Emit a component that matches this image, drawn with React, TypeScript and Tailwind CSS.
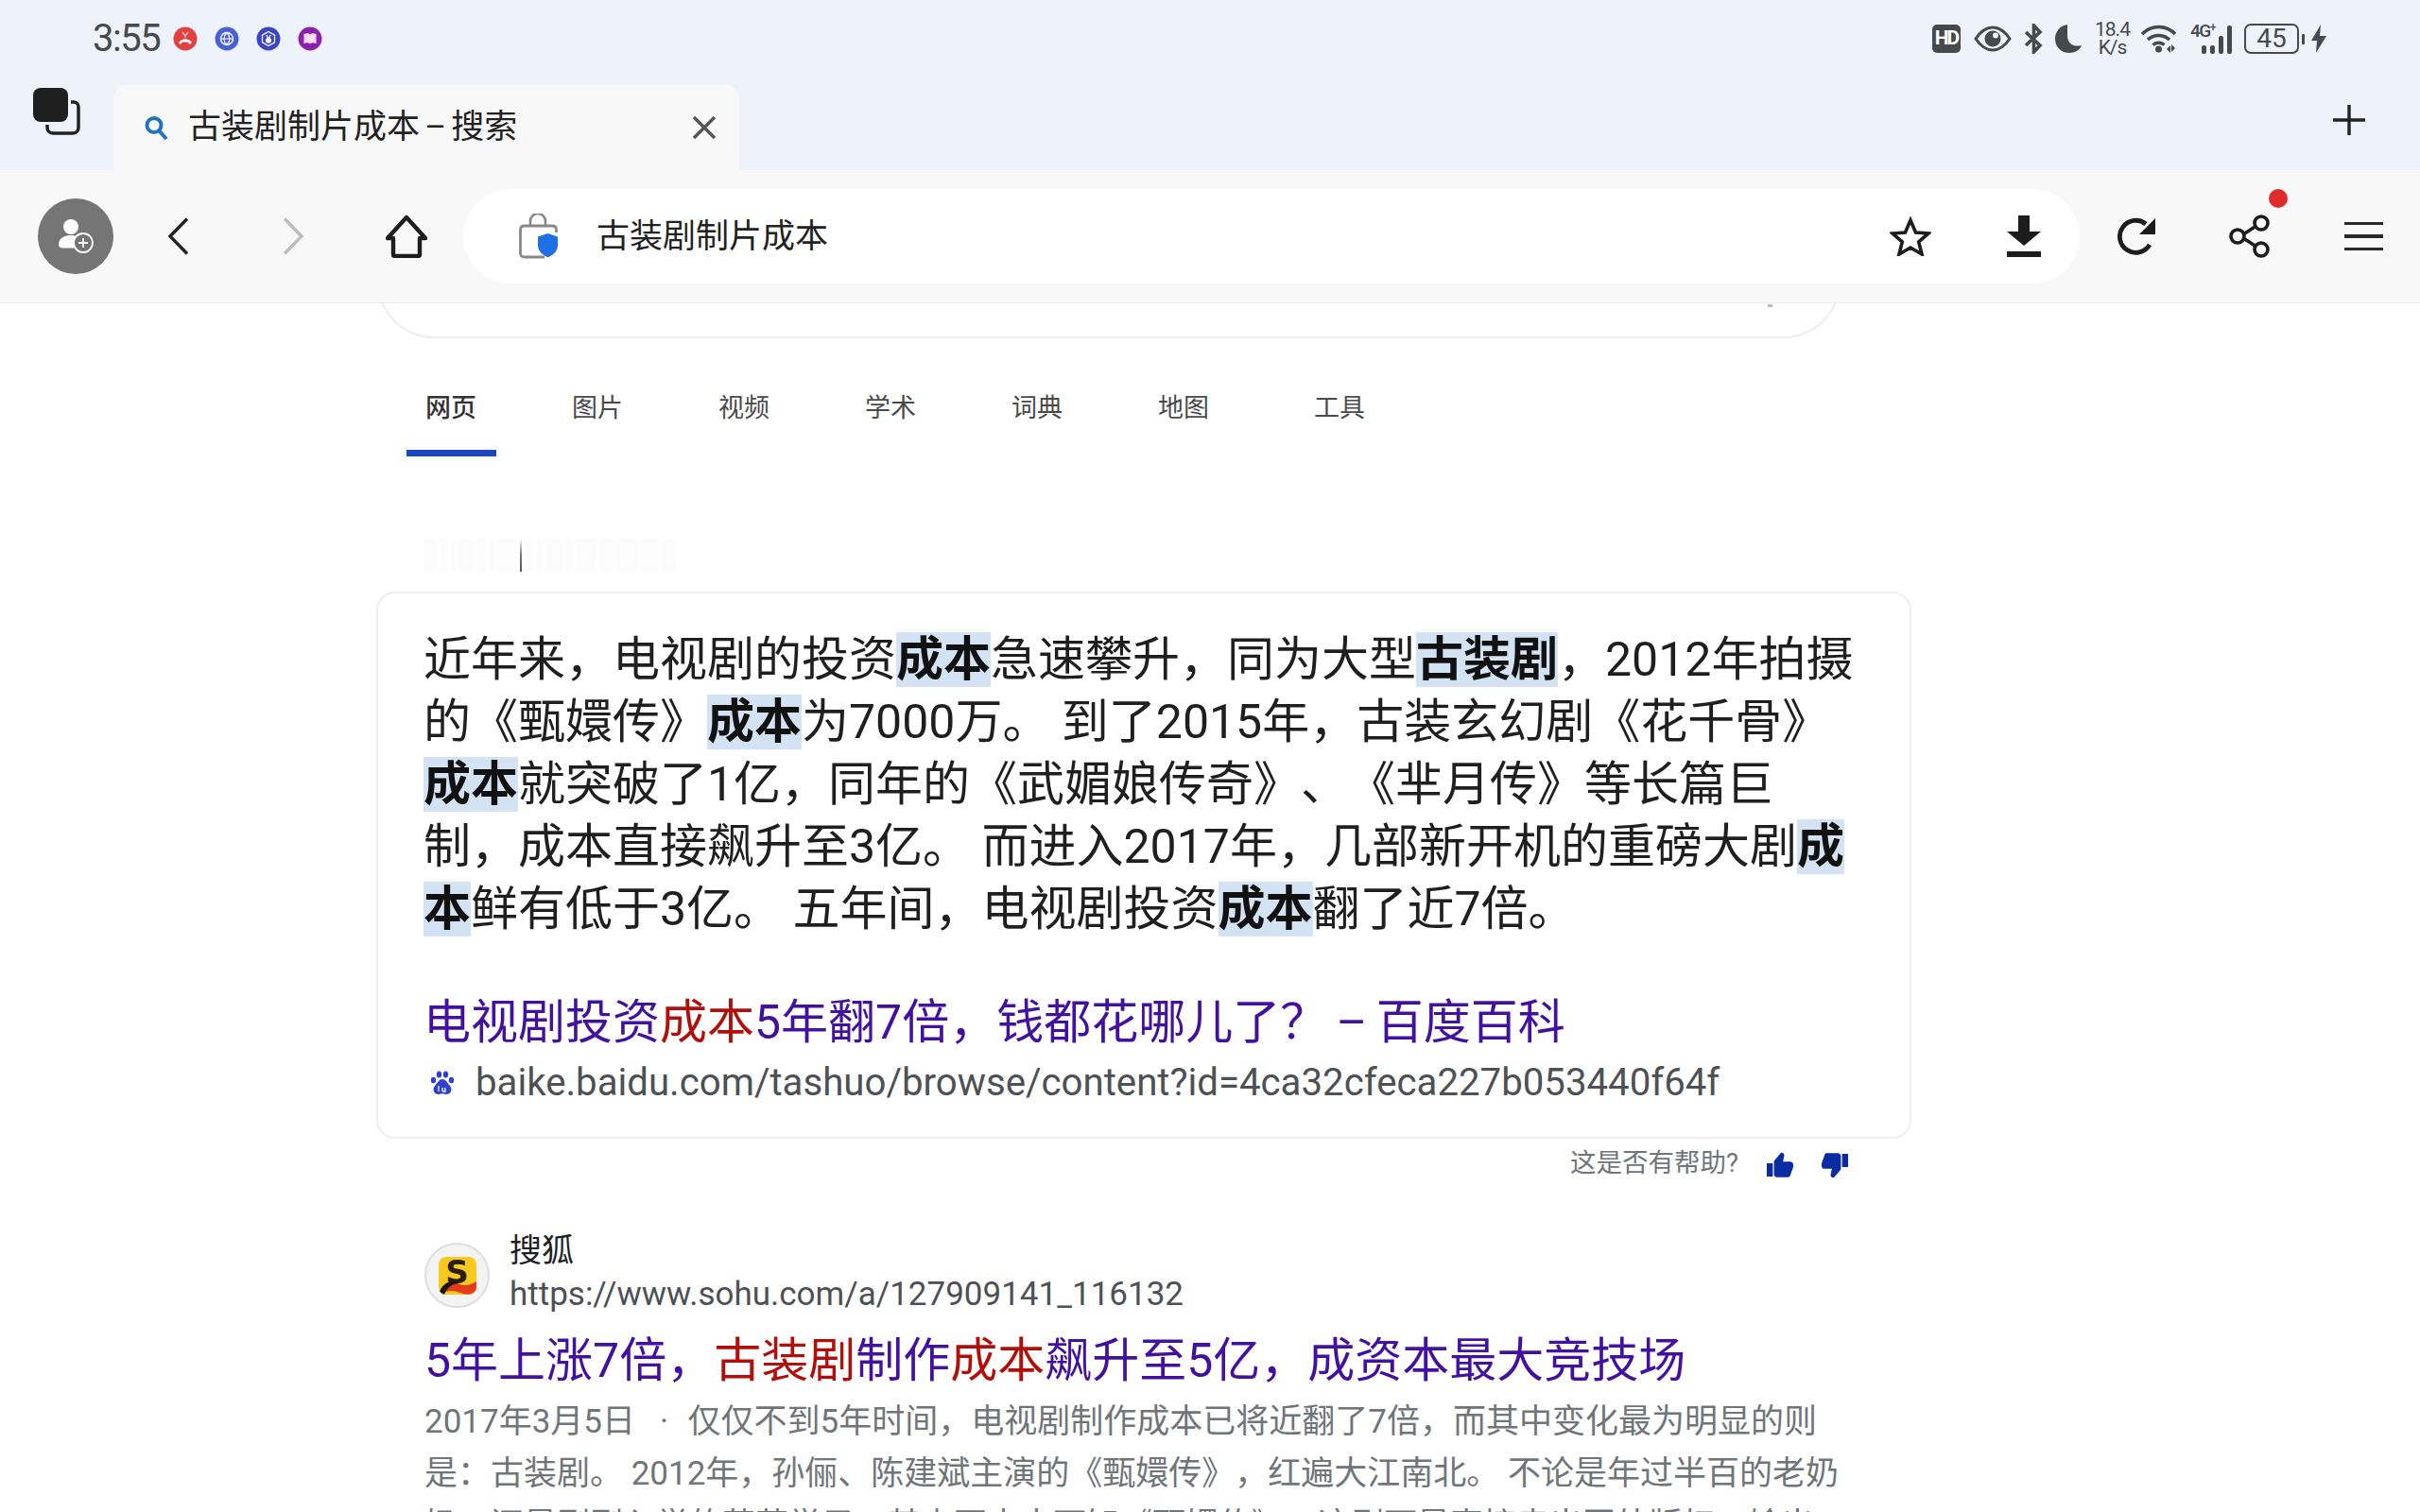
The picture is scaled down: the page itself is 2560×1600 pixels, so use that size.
import React from "react";

const Hl = ({ children }: { children: React.ReactNode }) => (
  <span className="bg-[#d3e3f3] font-bold text-[#111]">{children}</span>
);
const R = ({ children }: { children: React.ReactNode }) => <span className="text-[#b30f0a]">{children}</span>;

function StatusDots() {
  return (
    <div className="flex items-center gap-[18px] ml-[14px]">
      <svg width="26" height="26" viewBox="0 0 26 26"><circle cx="13" cy="13" r="12.5" fill="#df4140" /><path d="M6 17c4-5 10-5 14 0l-2.500 2-2-2.500h-5.500l-2 2.500z" fill="#fff" /><path d="M10 6l3 4 3-4M13 10v2" stroke="#f7c9c0" strokeWidth="1.300" fill="none" /></svg>
      <svg width="26" height="26" viewBox="0 0 26 26"><circle cx="13" cy="13" r="12.500" fill="#4b5fd6" /><circle cx="13" cy="13" r="6.500" fill="none" stroke="#fff" strokeWidth="1.400" /><path d="M6.500 13h13M13 6.500c-4 4-4 9 0 13M13 6.500c4 4 4 9 0 13" stroke="#fff" strokeWidth="1.200" fill="none" /></svg>
      <svg width="26" height="26" viewBox="0 0 26 26"><circle cx="13" cy="13" r="12.500" fill="#3c46c2" /><path d="M13 5.500l6.500 3.700v7.600L13 20.500l-6.500-3.700V9.200z" fill="none" stroke="#fff" strokeWidth="1.200" /><path d="M11 9l1.500 4M15 9l-1.500 4M10.500 14c1-1.500 4-1.500 5 0 0 2-1 3-2.500 3s-2.500-1-2.500-3z" stroke="#fff" strokeWidth="1.300" fill="#fff" /></svg>
      <svg width="26" height="26" viewBox="0 0 26 26"><circle cx="13" cy="13" r="12.500" fill="#8a22ad" /><path d="M6.500 8c3-1 5-1 6.500 .5 1.500-1.500 3.500-1.500 6.500-.5v10c-3-1-5-1-6.500 .5-1.500-1.500-3.500-1.500-6.500-.5z" fill="#fbdcee" /></svg>
    </div>
  );
}

function StatusRight() {
  const c = "#46494d";
  return (
    <div className="ml-auto flex items-center text-[#46494d] mr-[99px]">
      <div className="w-[30px] h-[30px] rounded-[5px] bg-[#46494d] text-white text-[21px] font-bold flex items-center justify-center tracking-[-2px]">HD</div>
      <svg className="ml-[14px]" width="40" height="28" viewBox="0 0 40 28"><path d="M2 14C8 5 14 2 20 2s12 3 18 12c-6 9-12 12-18 12S8 23 2 14z" fill="none" stroke={c} strokeWidth="3" /><circle cx="20" cy="14" r="8.500" fill={c} /><circle cx="23" cy="10.500" r="3" fill="#eef2fa" /></svg>
      <svg className="ml-[13px]" width="21" height="32" viewBox="0 0 21 32"><path d="M2 9l15 14-6.500 7V2L17 9 2 23" fill="none" stroke={c} strokeWidth="3.600" /></svg>
      <svg className="ml-[12px]" width="28" height="30" viewBox="0 0 28 30"><path d="M13 0C5 1 0 8 0 15c0 9 7 15 15 15 6 0 11-3 13-8-7 2-15-1-15-10C13 7 13 3 13 0z" fill={c} /></svg>
      <div className="ml-[14px] w-[37px] flex flex-col items-center text-[21px] leading-[19px] tracking-[-1px]"><span>18.4</span><span>K/s</span></div>
      <svg className="ml-[11px]" width="39" height="30" viewBox="0 0 39 30"><path d="M2 10c10-10 25-10 35 0M8 16c7-6 16-6 23 0M13.500 21.500c3.500-3 8.500-3 12 0" fill="none" stroke={c} strokeWidth="3.600" /><circle cx="19.500" cy="26" r="3.500" fill={c} /><path d="M28 27l4-4v8zM33 22l4 4-4 4z" fill={c} transform="translate(0 -1)" /></svg>
      <div className="ml-[14px] relative w-[44px] h-[31px] flex items-end justify-end gap-[4px]">
        <span className="absolute left-0 top-[-3px] text-[19px] font-medium leading-[20px] tracking-[-1.500px]">4G<sup className="text-[12px]">+</sup></span>
        <i className="w-[5px] h-[9px] bg-[#46494d] rounded-[2px]" />
        <i className="w-[5px] h-[9px] bg-[#46494d] rounded-[2px]" />
        <i className="w-[5px] h-[19px] bg-[#46494d] rounded-[2px]" />
        <i className="w-[5px] h-[30px] bg-[#46494d] rounded-[2px]" />
      </div>
      <div className="ml-[13px] w-[58px] h-[32px] rounded-[7px] border-2 border-[#46494d] flex items-center justify-center text-[28px] leading-none">45</div>
      <i className="ml-[3px] w-[3px] h-[11px] bg-[#46494d] rounded-[1px]" />
      <svg className="ml-[7px]" width="16" height="30" viewBox="0 0 16 30"><path d="M10 0L0 17h6l-1 13 11-18H9z" fill={c} /></svg>
    </div>
  );
}

function Toolbar() {
  return (
    <div className="h-[141px] bg-[#f8f8f8] border-b border-[#ececec] flex items-center relative z-10">
      <div className="ml-[40px] w-[80px] h-[80px] rounded-full bg-[#757575] flex items-center justify-center">
        <svg width="42" height="42" viewBox="0 0 42 42">
          <circle cx="16" cy="11" r="8" fill="#fff" />
          <path d="M3 30c0-7 6-10 13-10 3 0 5 .5 7 1.500-3 2.500-4 6-3 12H8c-3 0-5-1-5-3.500z" fill="#fff" />
          <circle cx="29" cy="28" r="10" fill="#757575" stroke="#fff" strokeWidth="1.800" />
          <path d="M29 23v10M24 28h10" stroke="#fff" strokeWidth="1.800" />
        </svg>
      </div>
      <svg className="ml-[58px]" width="21" height="40" viewBox="0 0 21 40"><path d="M20 1.500L2 20l18 18.500" fill="none" stroke="#222" strokeWidth="3.400" /></svg>
      <svg className="ml-[101px]" width="21" height="40" viewBox="0 0 21 40"><path d="M1 1.500L19 20 1 38.500" fill="none" stroke="#bdbdbd" strokeWidth="3.400" /></svg>
      <svg className="ml-[87px]" width="44" height="46" viewBox="0 0 44 46"><path d="M22 3L2 25h6v17c0 1.500 1 2 2 2h24c1 0 2-.5 2-2V25h6z" fill="none" stroke="#1d1d1d" strokeWidth="4.400" strokeLinejoin="round" /></svg>
      <div className="ml-[38px] w-[1710px] h-[100px] rounded-[50px] bg-white flex items-center">
        <svg className="ml-[59px]" width="42" height="48" viewBox="0 0 42 48">
          <path d="M12 13V8a8 8 0 0 1 16 0v5" fill="none" stroke="#888" strokeWidth="2.600" />
          <path d="M27 46H6c-3 0-4.500-1.500-4.500-4V17c0-2.500 1.500-4 4.500-4h29c3 0 4.500 1.500 4.500 4v3" fill="none" stroke="#888" strokeWidth="2.800" />
          <path d="M30.500 21l10.500 3.500v9c0 6-4.500 10-10.500 13-6-3-10.500-7-10.500-13v-9z" fill="#1f6fe5" />
        </svg>
        <span className="ml-[40px] text-[35px] text-[#222] leading-none whitespace-nowrap">古装剧制片成本</span>
        <svg className="ml-auto" width="44" height="42" viewBox="0 0 44 42"><path d="M22 4l5.500 13 13.500 1-10.300 9 3.300 13L22 33 10 40l3.300-13L3 18l13.500-1z" fill="none" stroke="#1d1d1d" strokeWidth="3.600" strokeLinejoin="miter" /></svg>
        <svg className="ml-[80px] mr-[41px]" width="36" height="44" viewBox="0 0 36 44"><path d="M12 0h12v17h12L18 32 0 17h12z" fill="#1d1d1d" /><rect y="38" width="36" height="6" fill="#1d1d1d" /></svg>
      </div>
      <svg className="ml-[40px]" width="40" height="40" viewBox="0 0 40 40"><path d="M34 29A17 17 0 1 1 30 7" fill="none" stroke="#1d1d1d" strokeWidth="4.800" /><path d="M40 1v17H23z" fill="#1d1d1d" /></svg>
      <div className="relative ml-[78px] w-[44px] h-[46px]">
        <svg width="44" height="46" viewBox="0 0 44 46"><path d="M32 10L12 23l20 13" fill="none" stroke="#1d1d1d" strokeWidth="3.600" /><circle cx="34" cy="9" r="7" fill="#f8f8f8" stroke="#1d1d1d" strokeWidth="3.600" /><circle cx="9" cy="23" r="7" fill="#f8f8f8" stroke="#1d1d1d" strokeWidth="3.600" /><circle cx="34" cy="37" r="7" fill="#f8f8f8" stroke="#1d1d1d" strokeWidth="3.600" /></svg>
        <i className="absolute left-[42px] top-[-27px] w-[20px] h-[20px] rounded-full bg-[#e02b2b]" />
      </div>
      <div className="ml-[78px] w-[41px] flex flex-col gap-[10px]">
        <i className="h-[3.500px] bg-[#2a2a2a]" />
        <i className="h-[3.500px] bg-[#2a2a2a]" />
        <i className="h-[3.500px] bg-[#2a2a2a]" />
      </div>
    </div>
  );
}

function Tabs() {
  return (
    <>
      <div className="ml-[450px] mt-[56px] flex gap-[101px] text-[27px] leading-[36px] text-[#4a4a4a] whitespace-nowrap">
        <span className="font-medium text-[#333]">网页</span>
        <span>图片</span>
        <span>视频</span>
        <span>学术</span>
        <span>词典</span>
        <span>地图</span>
        <span className="ml-[10px]">工具</span>
      </div>
      <div className="ml-[430px] mt-[26px] w-[95px] h-[7px] bg-[#1b47c4]" />
      <div className="ml-[448px] mt-[87px] h-[35px] flex items-stretch gap-[3px]">
        {[14, 9, 5, 16, 10, 6, 21].map((w, i) => <i key={i} className="bg-[#fcfcfc]" style={{ width: w }} />)}
        <i className="w-[2px] bg-gradient-to-b from-white via-[#777] to-[#555]" />
        {[10, 6, 18, 8, 22, 14, 24, 18, 16].map((w, i) => <i key={i} className="bg-[#fcfcfc]" style={{ width: w }} />)}
      </div>
    </>
  );
}

function Answer() {
  return (
    <div className="ml-[398px] mt-[21px] w-[1624px] h-[579px] rounded-[20px] border-2 border-[#eeeeee] pl-[48px] pt-[37px]">
      <div className="text-[50px] leading-[66px] text-[#1f1f1f] whitespace-nowrap">
        <div>近年来，电视剧的投资<Hl>成本</Hl>急速攀升，同为大型<Hl>古装剧</Hl>，2012年拍摄</div>
        <div>的《甄嬛传》<Hl>成本</Hl>为7000万。 到了2015年，古装玄幻剧《花千骨》</div>
        <div><Hl>成本</Hl>就突破了1亿，同年的《武媚娘传奇》、《芈月传》等长篇巨</div>
        <div>制，成本直接飙升至3亿。 而进入2017年，几部新开机的重磅大剧<Hl>成</Hl></div>
        <div><Hl>本</Hl>鲜有低于3亿。 五年间，电视剧投资<Hl>成本</Hl>翻了近7倍。</div>
      </div>
      <div className="mt-[54px] text-[50px] leading-[66px] text-[#43119f] whitespace-nowrap">
        电视剧投资<R>成本</R>5年翻7倍，钱都花哪儿了？ <span className="mx-[-3px]">–</span> 百度百科
      </div>
      <div className="mt-[6px] h-[50px] flex items-center whitespace-nowrap">
        <svg className="ml-[7px]" width="26" height="26" viewBox="0 0 26 26" fill="#2f3fd0">
          <ellipse cx="3.500" cy="10" rx="2.700" ry="3.300" />
          <ellipse cx="9.500" cy="4" rx="2.700" ry="3.500" />
          <ellipse cx="16.500" cy="4" rx="2.700" ry="3.500" />
          <ellipse cx="22.500" cy="10" rx="2.700" ry="3.300" />
          <path d="M13 9c4 0 5 4 8 7 3 4 1 9-4 9-2 0-3-.7-4-.7s-2 .7-4 .7c-5 0-7-5-4-9 3-3 4-7 8-7z" />
          <path d="M9 16v6M13 18v3c0 1 1 1 1.500 1H16V18" stroke="#fff" strokeWidth="1.300" fill="none" />
        </svg>
        <span className="ml-[22px] text-[40.200px] leading-none text-[#4d5156]">baike.baidu.com/tashuo/browse/content?id=4ca32cfeca227b053440f64f</span>
      </div>
    </div>
  );
}

function Helpful() {
  return (
    <div className="h-[52px] flex items-center whitespace-nowrap">
      <span className="ml-[1661px] text-[27.500px] leading-none text-[#70757a]">这是否有帮助?</span>
      <svg className="ml-[30px] mt-[4px]" width="28" height="28" viewBox="1 1 22 21" fill="#0a2ba3"><path d="M1 21h5V10H1zM23 11c0-1.500-1-2.500-2.500-2.500h-6l1-5c.2-1.500-1.500-3-3-2L7 8v11c0 1.500 1 2.500 2.500 2.500h9c1 0 2-.5 2-1.500l2.500-7z" /></svg>
      <svg className="ml-[30px] mt-[4px]" width="28" height="32" viewBox="1 1 22 21" fill="#0a2ba3"><path d="M23 2h-5v11h5zM1 12c0 1.500 1 2.500 2.500 2.500h6l-1 5c-.2 1.500 1.500 3 3 2L17 15V4c0-1.500-1-2.500-2.500-2.500h-9c-1 0-2 .5-2 1.500L1 10z" /></svg>
    </div>
  );
}

function SohuResult() {
  return (
    <div className="ml-[449px] mt-[43px]">
      <div className="flex gap-[21px]">
        <div className="mt-[15px] w-[69px] h-[69px] rounded-full bg-[#f3f3f3] border-2 border-[#dedede] flex items-center justify-center">
          <div className="relative w-[40px] h-[40px] rounded-[8px] bg-[#f8c91f] overflow-hidden flex items-center justify-center">
            <span className="text-[34px] leading-none font-black text-[#2b1d10] mt-[-8px] font-['DejaVu_Sans',sans-serif]">S</span>
            <svg className="absolute left-0 bottom-0" width="40" height="20" viewBox="0 0 40 20"><path d="M0 20C3 9 12 5 22 9c6 2 12 1 18-3v9c-4 5-10 6-17 3-7-3-14-3-23 2z" fill="#e23b1c" /><path d="M0 20C3 8 13 3 22 8c-7 0-13 4-16 12z" fill="#1c1410" /></svg>
          </div>
        </div>
        <div className="whitespace-nowrap">
          <div className="text-[34px] leading-[46px] text-[#202124]">搜狐</div>
          <div className="mt-[1px] text-[35px] leading-[46px] text-[#4d5156]">https://www.sohu.com/a/127909141_116132</div>
        </div>
      </div>
      <div className="mt-[14px] text-[50px] leading-[66px] text-[#43119f] whitespace-nowrap">
        5年上涨7倍，<R>古装剧</R>制作<R>成本</R>飙升至5亿，成资本最大竞技场
      </div>
      <div className="mt-[4px] text-[35px] leading-[55px] text-[#70757a] whitespace-nowrap">
        <div>2017年3月5日&nbsp;&nbsp;&nbsp;<span className="mr-[3px]">·</span>&nbsp;&nbsp;仅仅不到5年时间，电视剧制作成本已将近翻了7倍，而其中变化最为明显的则</div>
        <div>是：古装剧。 2012年，孙俪、陈建斌主演的《甄嬛传》，红遍大江南北。 不论是年过半百的老奶</div>
        <div>奶，还是刚刚入学的莘莘学子，甚少不去人可知《甄嬛传》，这剧可是直接卖出国外版权，输出</div>
      </div>
    </div>
  );
}

export default function App() {
  return (
    <div lang="zh-CN" className="w-[2560px] h-[1600px] overflow-hidden bg-white font-['Roboto','Noto_Sans_CJK_SC',sans-serif] [text-spacing-trim:space-all]">
      <div className="h-[180px] bg-[#eef2fa]">
        <div className="h-[82px] flex items-center">
          <span className="ml-[98px] text-[40px] leading-none text-[#46494d] tracking-[-1.500px]">3:55</span>
          <StatusDots />
          <StatusRight />
        </div>
        <div className="h-[98px] flex items-center">
          <svg className="ml-[35px] self-start mt-[11px]" width="50" height="50" viewBox="0 0 50 50">
            <path d="M40 15h3a5 5 0 0 1 5 5v22c0 3-2 6-6 6H21c-4 0-6-3-6-6v-3" fill="none" stroke="#222" strokeWidth="3.500" />
            <rect x="0" y="0" width="37" height="36" rx="8" fill="#1f1f1f" />
          </svg>
          <div className="ml-[35px] self-end w-[662px] h-[91px] rounded-t-[16px] bg-[#f8f8f8] flex items-center">
            <svg className="ml-[32px]" width="26" height="26" viewBox="0 0 26 26"><circle cx="11" cy="10.500" r="7.500" fill="none" stroke="#2474bd" strokeWidth="4" /><path d="M16 16l8 9" stroke="#2474bd" strokeWidth="4" /></svg>
            <span className="ml-[21px] text-[35px] leading-none text-[#222] whitespace-nowrap">古装剧制片成本 <span className="mx-[-3.500px]">–</span> 搜索</span>
            <svg className="ml-auto mr-[24px]" width="26" height="26" viewBox="0 0 26 26"><path d="M2 2l22 22M24 2L2 24" stroke="#555" strokeWidth="3.400" /></svg>
          </div>
          <svg className="ml-auto mr-[58px] mb-[8px]" width="34" height="34" viewBox="0 0 34 34"><path d="M17 1v32M0 17h34" stroke="#222" strokeWidth="3.400" /></svg>
        </div>
      </div>
      <Toolbar />
      <div className="ml-[399px] mt-[-24px] w-[1548px] h-[61px] rounded-b-[60px] border-x-2 border-b-2 border-[#eceef0] flex justify-end pr-[70px] pt-[25px]">
        <i className="w-[5px] h-[3px] bg-[#bbbbbb]" />
      </div>
      <Tabs />
      <Answer />
      <Helpful />
      <SohuResult />
    </div>
  );
}
